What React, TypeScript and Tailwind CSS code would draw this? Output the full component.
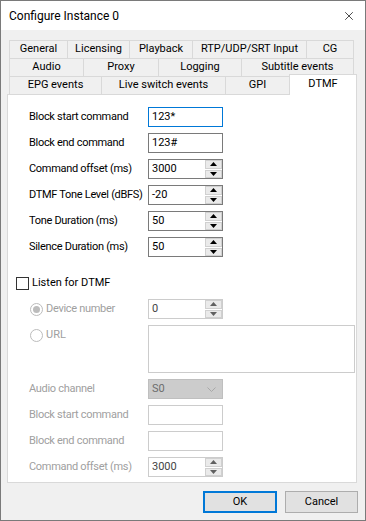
import { X } from "lucide-react";

const TAB_ROWS = [
  [
    { label: "General", w: "w-[58px]" },
    { label: "Licensing", w: "w-[62px]" },
    { label: "Playback", w: "w-[63px]" },
    { label: "RTP/UDP/SRT Input", w: "w-[114px]" },
    { label: "CG", w: "w-[48px]" },
  ],
  [
    { label: "Audio", w: "w-[74px]" },
    { label: "Proxy", w: "w-[75px]" },
    { label: "Logging", w: "w-[83px]" },
    { label: "Subtitle events", w: "w-[113px]" },
  ],
];

const LAST_ROW = [
  { label: "EPG events", w: "w-[92px]" },
  { label: "Live switch events", w: "w-[124px]" },
  { label: "GPI", w: "w-[64px]" },
];

function Tab({ label, w, last }: { label: string; w: string; last?: boolean }) {
  return (
    <div
      className={`${w} h-[18px] shrink-0 flex items-center justify-center border-t border-l border-[#d9d9d9] bg-[#f0f0f0] ${last ? "border-r" : ""}`}
    >
      {label}
    </div>
  );
}

function Arrow({ up, disabled }: { up?: boolean; disabled?: boolean }) {
  return (
    <div className="flex-1 flex items-center justify-center bg-[#eaeaea] border border-[#d0d0d0]">
      <svg width="7" height="4" viewBox="0 0 7 4">
        <path d={up ? "M0 4 L3.5 0 L7 4 Z" : "M0 0 L3.5 4 L7 0 Z"} fill={disabled ? "#606060" : "#000"} />
      </svg>
    </div>
  );
}

function Spin({ value, disabled }: { value: string; disabled?: boolean }) {
  return (
    <div
      className={`flex h-[20px] w-[75px] border bg-white ${disabled ? "border-[#cccccc]" : "border-[#7a7a7a]"}`}
    >
      <div className={`flex-1 flex items-center pl-[3px] ${disabled ? "text-[#444]" : ""}`}>{value}</div>
      <div className="w-[17px] flex flex-col gap-[1px] bg-white">
        <Arrow up disabled={disabled} />
        <Arrow disabled={disabled} />
      </div>
    </div>
  );
}

function Field({ value, focused, disabled }: { value?: string; focused?: boolean; disabled?: boolean }) {
  const border = focused ? "border-[#0078d7]" : disabled ? "border-[#cccccc]" : "border-[#7a7a7a]";
  return (
    <div className={`h-[20px] w-[75px] border ${border} bg-white flex items-center pl-[3px]`}>{value}</div>
  );
}

function Row({ label, children, disabled }: { label: string; children: React.ReactNode; disabled?: boolean }) {
  return (
    <div className="flex items-center h-[20px]">
      <div className={`w-[119px] whitespace-nowrap tracking-[-0.3px] ${disabled ? "text-[#a0a0a0]" : ""}`}>
        {label}
      </div>
      {children}
    </div>
  );
}

function Radio({ checked }: { checked?: boolean }) {
  return (
    <div className="w-[13px] h-[13px] rounded-full border border-[#bcbcbc] bg-white flex items-center justify-center">
      {checked && <div className="w-[7px] h-[7px] rounded-full bg-[#bcbcbc]" />}
    </div>
  );
}

export default function App() {
  return (
    <div className="w-[366px] h-[521px] border border-[#7a7a7a] bg-[#f0f0f0] flex flex-col text-[11px] text-black font-[Roboto,'Liberation_Sans',sans-serif]">
      {/* Title bar */}
      <div className="h-[29px] shrink-0 bg-white flex items-center justify-between pl-[8px] pr-[9px]">
        <span className="text-[12px]">Configure Instance 0</span>
        <X className="w-[14px] h-[14px]" strokeWidth={1.2} />
      </div>

      {/* Tabs */}
      <div className="mt-[10px] ml-[8px] w-[345px] flex flex-col">
        {TAB_ROWS.map((row, ri) => (
          <div key={ri} className="flex">
            {row.map((t, i) => (
              <Tab key={t.label} label={t.label} w={t.w} last={i === row.length - 1} />
            ))}
          </div>
        ))}
        <div className="flex items-end h-[18px]">
          {LAST_ROW.map((t) => (
            <Tab key={t.label} label={t.label} w={t.w} />
          ))}
          <div className="relative z-10 w-[68px] h-[21px] mb-[-1px] shrink-0 flex items-center justify-center pb-[2px] bg-white border-t border-l border-r border-[#d9d9d9]">
            DTMF
          </div>
        </div>
      </div>

      {/* Panel */}
      <div className="ml-[6px] w-[350px] h-[389px] shrink-0 border border-[#d9d9d9] bg-white flex flex-col">
        <div className="pt-[12px] pl-[21px] flex flex-col gap-[6px]">
          <Row label="Block start command">
            <Field value="123*" focused />
          </Row>
          <Row label="Block end command">
            <Field value="123#" />
          </Row>
          <Row label="Command offset (ms)">
            <Spin value="3000" />
          </Row>
          <Row label="DTMF Tone Level (dBFS)">
            <Spin value="-20" />
          </Row>
          <Row label="Tone Duration (ms)">
            <Spin value="50" />
          </Row>
          <Row label="Silence Duration (ms)">
            <Spin value="50" />
          </Row>
        </div>

        <div className="mt-[20px] pl-[8px] flex items-center gap-[3px] h-[13px]">
          <div className="w-[13px] h-[13px] border border-[#333333] bg-white" />
          <span>Listen for DTMF</span>
        </div>

        <div className="mt-[9px] pl-[22px] flex flex-col gap-[6px]">
          <div className="flex items-center h-[20px]">
            <div className="w-[118px] flex items-center gap-[3px] text-[#a0a0a0] tracking-[-0.3px]">
              <Radio checked />
              <span>Device number</span>
            </div>
            <Spin value="0" disabled />
          </div>
          <div className="flex items-start">
            <div className="w-[118px] h-[20px] flex items-center gap-[3px] text-[#a0a0a0]">
              <Radio />
              <span>URL</span>
            </div>
            <div className="w-[207px] h-[48px] border border-[#cccccc] bg-white" />
          </div>
        </div>

        <div className="mt-[6px] pl-[21px] flex flex-col gap-[6px]">
          <Row label="Audio channel" disabled>
            <div className="h-[20px] w-[75px] border border-[#bfbfbf] bg-[#cccccc] flex items-center justify-between pl-[3px] pr-[6px] text-[#6d6d6d]">
              <span>S0</span>
              <svg width="9" height="5" viewBox="0 0 9 5">
                <path d="M0.5 0.5 L4.5 4.5 L8.5 0.5" fill="none" stroke="#a8a8a8" strokeWidth="1" />
              </svg>
            </div>
          </Row>
          <Row label="Block start command" disabled>
            <Field disabled />
          </Row>
          <Row label="Block end command" disabled>
            <Field disabled />
          </Row>
          <Row label="Command offset (ms)" disabled>
            <Spin value="3000" disabled />
          </Row>
        </div>
      </div>

      {/* Buttons */}
      <div className="mt-[8px] pr-[7px] flex justify-end gap-[8px]">
        <button className="w-[74px] h-[22px] border-2 border-[#0078d7] bg-[#e1e1e1]">OK</button>
        <button className="w-[73px] h-[22px] border border-[#adadad] bg-[#e1e1e1]">Cancel</button>
      </div>
    </div>
  );
}
